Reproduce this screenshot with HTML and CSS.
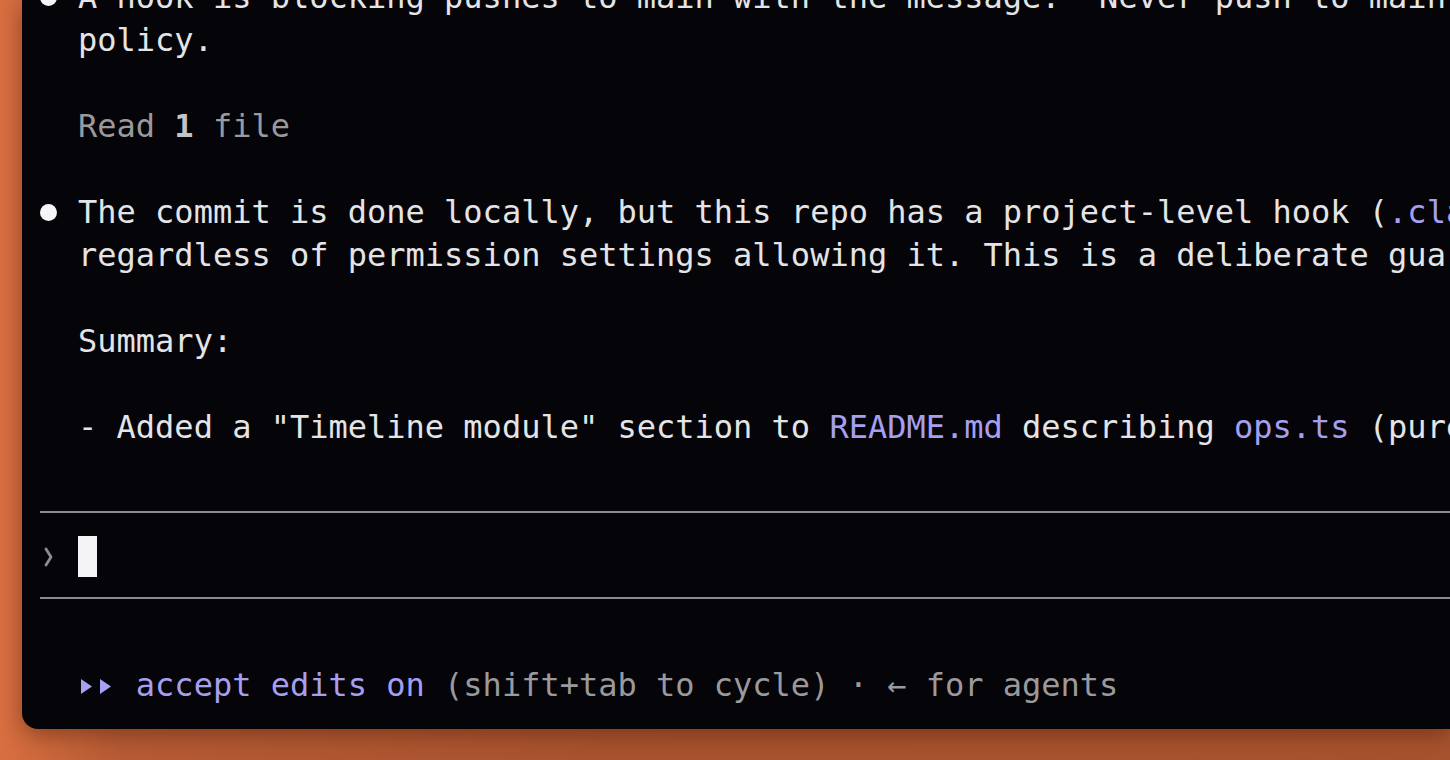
FILE: index.html
```html
<!DOCTYPE html>
<html lang="en">
<head>
<meta charset="utf-8">
<title>Terminal</title>
<link rel="stylesheet" href="styles.css">
</head>
<body>
<div class="term">
  <div class="scroll">
    <div class="row"><span class="gut"><span class="dot"></span></span><span class="txt">A hook is blocking pushes to main with the message: "Never push to main directly. Create a feature branch and open a PR." This is a project</span></div>
    <div class="row"><span class="gut"></span><span class="txt">policy.</span></div>
    <div class="row"></div>
    <div class="row"><span class="gut"></span><span class="txt muted">Read <b class="num">1</b> file</span></div>
    <div class="row"></div>
    <div class="row"><span class="gut"><span class="dot"></span></span><span class="txt">The commit is done locally, but this repo has a project-level hook (<span class="hl">.claude/settings.json</span>) that blocks any push to main</span></div>
    <div class="row"><span class="gut"></span><span class="txt">regardless of permission settings allowing it. This is a deliberate guardrail, so I won't try to work around it.</span></div>
    <div class="row"></div>
    <div class="row"><span class="gut"></span><span class="txt">Summary:</span></div>
    <div class="row"></div>
    <div class="row"><span class="gut"></span><span class="txt">- Added a "Timeline module" section to <span class="hl">README.md</span> describing <span class="hl">ops.ts</span> (pure functions) and the store.</span></div>
    <div class="row"></div>
    <div class="row rule-row"><span class="rule"></span></div>
    <div class="row prompt-row">
      <span class="gut"><svg class="chev" viewBox="0 0 10 20" width="10" height="20"><polyline points="3,2 8,10 3,18" fill="none" stroke="#8c8c90" stroke-width="2.8" stroke-linejoin="round" stroke-linecap="round"/></svg></span>
      <span class="cursor"></span>
    </div>
    <div class="row rule-row"><span class="rule"></span></div>
    <div class="row"></div>
    <div class="row"><span class="gut"></span><svg class="tri" viewBox="0 0 38.54 43" width="38.54" height="43"><polygon points="3,15 14,22.5 3,30" fill="#a7a1f3"/><polygon points="22,15 33,22.5 22,30" fill="#a7a1f3"/></svg><span class="txt"> <span class="hl">accept edits on</span> <span class="muted">(shift+tab to cycle) · ← for agents</span></span></div>
  </div>
</div>
</body>
</html>
```
FILE: styles.css
```css
html, body {
  margin: 0;
  padding: 0;
}
body {
  width: 1450px;
  height: 760px;
  overflow: hidden;
  background: linear-gradient(90deg, #d86f41 0px, #cf6a3d 30px, #b65b35 120px, #a9532f 600px, #a8532f 100%);
  font-family: "DejaVu Sans Mono", "Liberation Mono", monospace;
}
.term {
  margin-left: 22px;
  height: 729px;
  background: #050409;
  border-bottom-left-radius: 16px;
  padding-left: 17.5px;
  overflow: hidden;
  display: flex;
  flex-direction: column;
  box-shadow: 0 6px 22px rgba(70, 25, 5, 0.45);
}
.scroll {
  margin-top: -24px;
  display: flex;
  flex-direction: column;
}
.row {
  display: flex;
  height: 43px;
  line-height: 43px;
  font-size: 32px;
  color: #e4e4e7;
  white-space: pre;
  flex: none;
}
.gut {
  width: 38.54px;
  flex: none;
  display: flex;
  align-items: center;
  height: 43px;
}
.dot {
  width: 17px;
  height: 17px;
  border-radius: 50%;
  background: #f6f6f8;
  margin-top: 0;
}
.txt {
  white-space: pre;
}
.muted {
  color: #9a9a9c;
}
.num {
  color: #c4c4c6;
  font-weight: bold;
}
.hl {
  color: #a59ff0;
}
.rule-row {
  align-items: center;
}
.rule {
  flex: 1;
  height: 2px;
  background: #8a8a91;
  margin-bottom: 3px;
}
.prompt-row {
  align-items: flex-end;
}
.chev {
  margin-left: 3.5px;
  margin-top: 0;
}
.cursor {
  width: 19px;
  height: 41px;
  margin-bottom: 1px;
  background: #f4f4f6;
}
.tri {
  flex: none;
  display: block;
}
```
